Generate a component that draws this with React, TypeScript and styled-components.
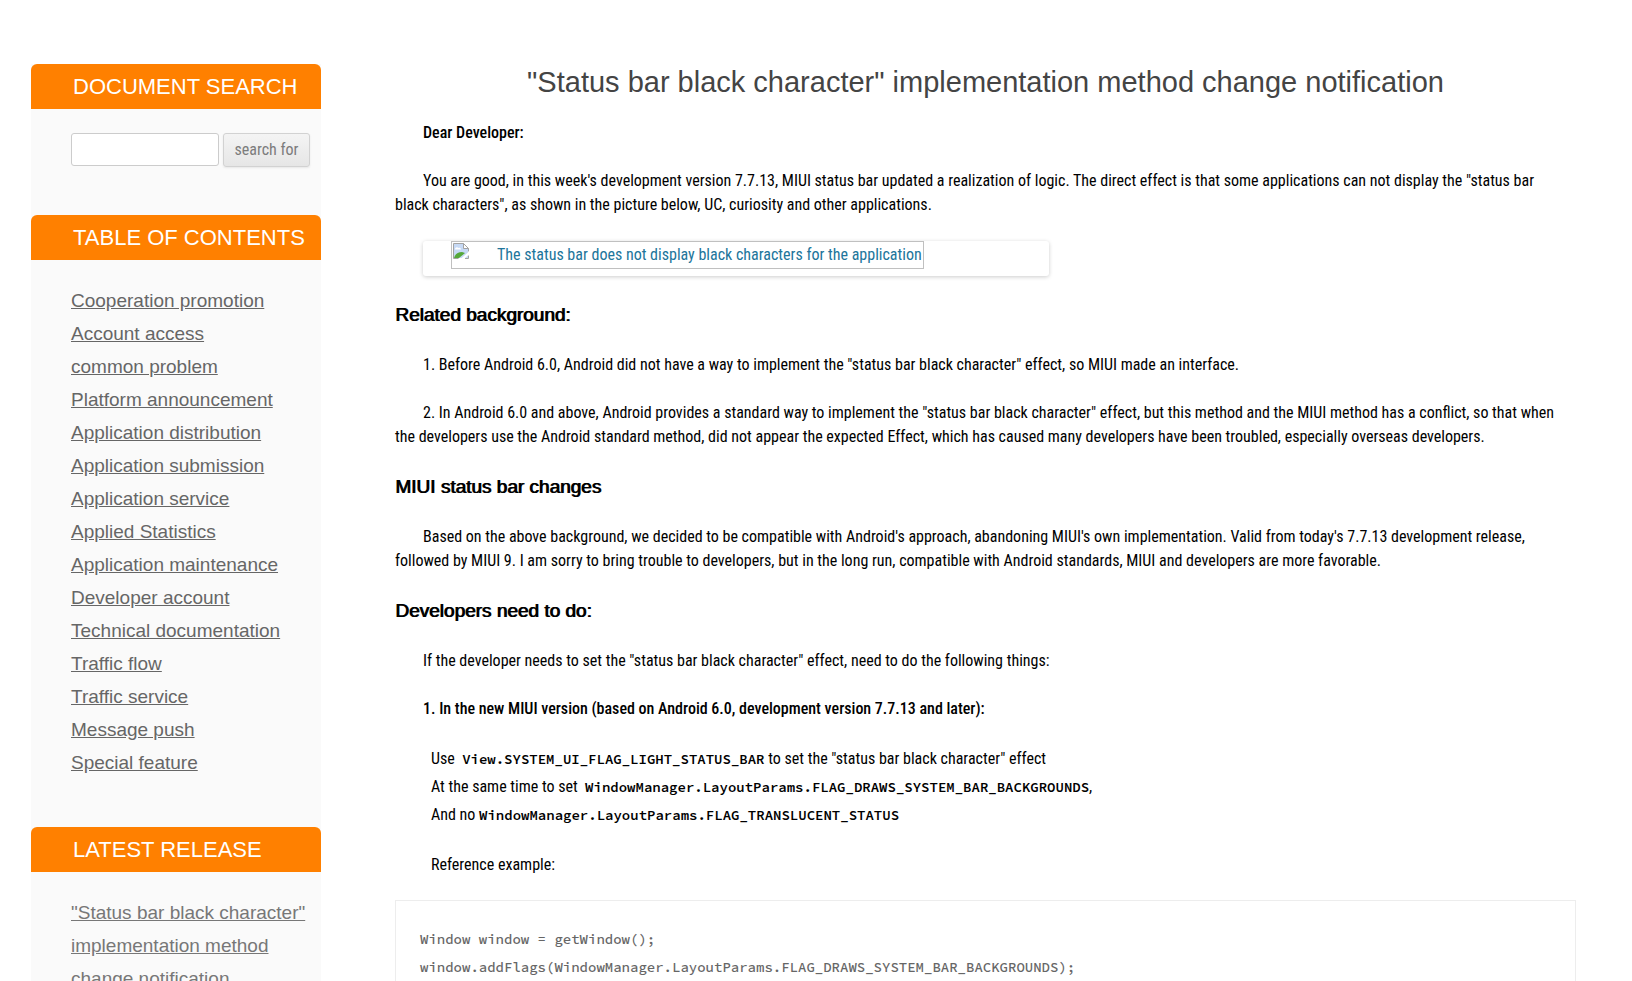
import React from 'react';
import styled, { createGlobalStyle } from 'styled-components';

const sans = `"Liberation Sans", Arial, sans-serif`;
const text = `"Roboto Condensed", Roboto, "Liberation Sans", sans-serif`;
const mono = `"Source Code Pro", "Noto Sans Mono", "Liberation Mono", monospace`;

const GlobalStyle = createGlobalStyle`
  *, *::before, *::after { box-sizing: border-box; }
  body {
    margin: 0;
    background: #fff;
    color: #000;
    font: 16px/24px ${text};
  }
`;

const Page = styled.div`
  display: flex;
  gap: 74px;
  padding: 64px 56px 0 31px;
`;

const Sidebar = styled.aside`
  flex: 0 0 290px;
  min-width: 0;
  background: #fafafa;
`;

const Widget = styled.section`
  padding-bottom: 48px;
`;

const WidgetTitle = styled.h2`
  margin: 0;
  padding: 1px 0 0 42px;
  border-radius: 6px 6px 0 0;
  background: #ff8000;
  color: #fff;
  font: 400 22px/44px ${sans};
  text-transform: uppercase;
  white-space: nowrap;
`;

const SearchForm = styled.form`
  display: flex;
  gap: 4px;
  padding: 24px 11px 0 40px;
`;

const SearchInput = styled.input`
  flex: 1;
  min-width: 0;
  height: 33px;
  padding: 6px;
  border: 1px solid #ccc;
  border-radius: 3px;
  background: #fff;
  font: inherit;
`;

const SearchButton = styled.button`
  width: 87px;
  height: 34px;
  padding: 0;
  border: 1px solid #d2d2d2;
  border-radius: 3px;
  background: linear-gradient(#f4f4f4, #e6e6e6);
  box-shadow: 0 1px 2px rgba(64, 64, 64, 0.1);
  color: #7c7c7c;
  font: inherit;
`;

const LinkList = styled.ul`
  margin: 0;
  padding: 24px 11px 0 40px;
  list-style: none;
  font: 19px/33px ${sans};
`;

const SideLink = styled.a<{ $soft?: boolean }>`
  color: ${(p) => (p.$soft ? '#777' : '#666')};
  text-decoration: underline;
`;

const Article = styled.article`
  flex: 1;
  min-width: 0;
`;

const Title = styled.h1`
  margin: 0 0 21px;
  color: #444;
  font: 400 29px/36px ${sans};
  text-align: center;
`;

const Paragraph = styled.p`
  margin: 0 0 24px;
  text-indent: 28px;
`;

const Strong = styled.strong`
  font-weight: 500;
`;

const Heading = styled.h2`
  margin: 0 0 24px;
  font: 400 19px/28px ${sans};
  text-shadow: 1px 0 0 currentColor;
`;

const Figure = styled.a`
  display: flex;
  align-items: flex-start;
  width: 626px;
  max-width: 100%;
  height: 35px;
  margin: 0 0 25px 28px;
  padding-left: 28px;
  border-radius: 3px;
  box-shadow: 0 1px 4px rgba(0, 0, 0, 0.2);
  color: #21759b;
  text-decoration: none;
`;

const MissingImage = styled.span`
  display: flex;
  gap: 28px;
  padding: 1px;
  border: 1px solid #c0c0c0;
`;

const Steps = styled.div`
  margin: 0 0 24px 36px;
  line-height: 28px;
`;

const Indented = styled.p`
  margin: 0 0 23px 36px;
`;

const Code = styled.code`
  font: 600 14px/20px ${mono};
`;

const CodeBlock = styled.pre`
  margin: 0;
  padding: 24px;
  border: 1px solid #ededed;
  color: #666;
  font: 500 14px/28px ${mono};
  overflow: hidden;
`;

const topics = [
  'Cooperation promotion', 'Account access', 'common problem', 'Platform announcement',
  'Application distribution', 'Application submission', 'Application service',
  'Applied Statistics', 'Application maintenance', 'Developer account',
  'Technical documentation', 'Traffic flow', 'Traffic service', 'Message push',
  'Special feature',
];

const BrokenIcon = () => (
  <svg width="16" height="16" viewBox="0 0 16 16" aria-hidden="true">
    <path d="M1 1h9l5 5v9H1z" fill="#c6d9f5" />
    <path d="M2 6.5c0-2 2-3 3.500-1.500 1-.5 2.500 0 2.500 1.500z" fill="#fff" />
    <path d="M1 15c1-4 4-6 8-6l3 1-6 5z" fill="#55a83a" />
    <path d="M.5 15.500V.5h10l5 5v3M.5 15.500h5M12 15.500h3.500v-3" fill="none" stroke="#a3a3a3" />
    <path d="M10.500.5v5h5z" fill="#fff" stroke="#a3a3a3" />
    <path d="M16 8.500L7.500 16h3.500l5-4.500z" fill="#fff" />
  </svg>
);

export default function App() {
  return (
    <>
      <GlobalStyle />
      <Page>
        <Sidebar>
          <Widget>
            <WidgetTitle>Document search</WidgetTitle>
            <SearchForm onSubmit={(e) => e.preventDefault()}>
              <SearchInput type="text" aria-label="Document search" />
              <SearchButton type="submit">search for</SearchButton>
            </SearchForm>
          </Widget>
          <Widget>
            <WidgetTitle>Table of contents</WidgetTitle>
            <LinkList>
              {topics.map((t) => (
                <li key={t}><SideLink href="#">{t}</SideLink></li>
              ))}
            </LinkList>
          </Widget>
          <Widget>
            <WidgetTitle>Latest release</WidgetTitle>
            <LinkList>
              <li>
                <SideLink href="#" $soft>
                  "Status bar black character" implementation method change notification
                </SideLink>
              </li>
            </LinkList>
          </Widget>
        </Sidebar>
        <Article>
          <Title>"Status bar black character" implementation method change notification</Title>
          <Paragraph><Strong>Dear Developer:</Strong></Paragraph>
          <Paragraph>
            You are good, in this week's development version 7.7.13, MIUI status bar updated a
            realization of logic. The direct effect is that some applications can not display
            the "status bar black&nbsp;characters", as shown in the picture below, UC, curiosity
            and other applications.
          </Paragraph>
          <Figure href="#">
            <MissingImage>
              <BrokenIcon />
              The status bar does not display black characters for the application
            </MissingImage>
          </Figure>
          <Heading>Related background:</Heading>
          <Paragraph>
            1. Before Android 6.0, Android did not have a way to implement the "status bar black
            character" effect, so MIUI made an interface.
          </Paragraph>
          <Paragraph>
            2. In Android 6.0 and above, Android provides a standard way to implement the "status
            bar black character" effect, but this method and the MIUI method has a conflict, so
            that when the&nbsp;developers use the Android standard method, did not appear the
            expected Effect, which has caused many developers have been troubled, especially
            overseas developers.
          </Paragraph>
          <Heading>MIUI status bar changes</Heading>
          <Paragraph>
            Based on the above background, we decided to be compatible with Android's approach,
            abandoning MIUI's own implementation. Valid from today's 7.7.13 development release,
            followed by MIUI 9. I am sorry to bring trouble to developers, but in the long run,
            compatible with Android standards, MIUI and developers are more favorable.
          </Paragraph>
          <Heading>Developers need to do:</Heading>
          <Paragraph>
            If the developer needs to set the "status bar black character" effect, need to do the
            following things:
          </Paragraph>
          <Paragraph>
            <Strong>
              1. In the new MIUI version (based on Android 6.0, development version 7.7.13 and
              later):
            </Strong>
          </Paragraph>
          <Steps>
            <div>
              Use &nbsp;<Code>View.SYSTEM_UI_FLAG_LIGHT_STATUS_BAR</Code> to set the "status bar
              black character" effect
            </div>
            <div>
              At the same time to set &nbsp;
              <Code>WindowManager.LayoutParams.FLAG_DRAWS_SYSTEM_BAR_BACKGROUNDS</Code>,
            </div>
            <div>
              And no <Code>WindowManager.LayoutParams.FLAG_TRANSLUCENT_STATUS</Code>
            </div>
          </Steps>
          <Indented>Reference example:</Indented>
          <CodeBlock>
            {`Window window = getWindow();
window.addFlags(WindowManager.LayoutParams.FLAG_DRAWS_SYSTEM_BAR_BACKGROUNDS);`}
          </CodeBlock>
        </Article>
      </Page>
    </>
  );
}
